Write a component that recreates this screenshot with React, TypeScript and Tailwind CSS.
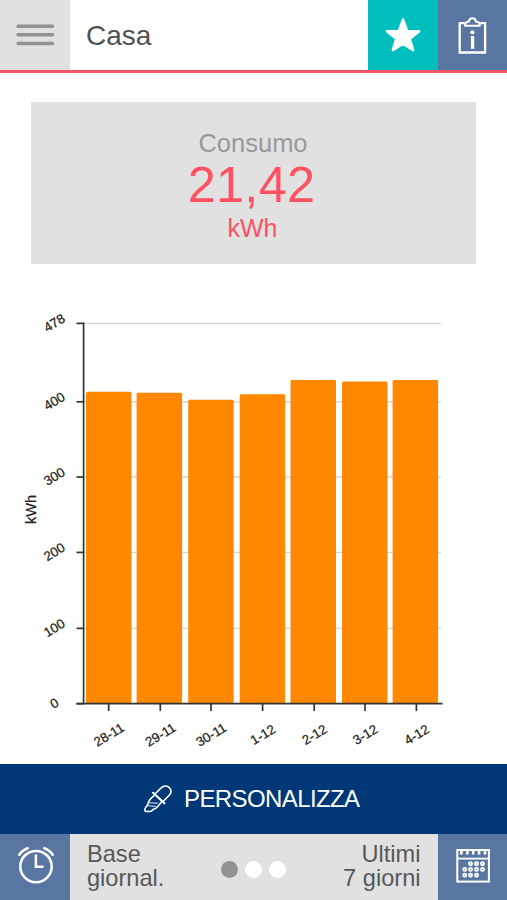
const bars = [
  { label: '28-11', x: 86, top: 391.7, tick: 108.7 },
  { label: '29-11', x: 136.6, top: 392.7, tick: 160.3 },
  { label: '30-11', x: 188.2, top: 399.8, tick: 211 },
  { label: '1-12', x: 239.7, top: 394.3, tick: 262.6 },
  { label: '2-12', x: 290.5, top: 380, tick: 314.2 },
  { label: '3-12', x: 342, top: 381.6, tick: 365 },
  { label: '4-12', x: 392.6, top: 380, tick: 416.4 },
];

const ticks = [
  { label: '478', y: 323.4 },
  { label: '400', y: 401.8 },
  { label: '300', y: 477 },
  { label: '200', y: 552.4 },
  { label: '100', y: 628.4 },
  { label: '0', y: 703.7 },
];

function MenuIcon() {
  return (
    <svg width="70" height="69" viewBox="0 0 70 69" stroke="#929292" strokeWidth="3.4" strokeLinecap="round">
      <path d="M18 26.2H52.5M18 34.8H52.5M18 43.5H52.5" />
    </svg>
  );
}

function StarIcon() {
  return (
    <svg width="70" height="69" viewBox="0 0 70 69" fill="#fff" stroke="#fff" strokeWidth="2.4" strokeLinejoin="round">
      <path d="M35 19.5L39.2 31L51.2 31.3L41.8 38.8L45.2 50.2L35 43.8L24.8 50.2L28.2 38.8L18.8 31.3L30.8 31Z" />
    </svg>
  );
}

function ClipboardIcon() {
  return (
    <svg width="69" height="69" viewBox="0 0 69 69" fill="none" stroke="#fff" strokeWidth="2.3">
      <path d="M26.6 23.2H21.7V52.5H47.1V23.2H42.2" />
      <path d="M27 25.7C27 22.7 28.4 21.7 31.1 21.6C31.1 17.2 37.7 17.2 37.7 21.6C40.4 21.7 41.8 22.7 41.8 25.7Z" strokeWidth="2" strokeLinejoin="round" />
      <circle cx="34.4" cy="32.3" r="2.1" fill="#fff" stroke="none" />
      <path d="M34.6 36V48.5" strokeWidth="3.2" />
      <path d="M32.6 36.6H34.6M32.6 48H36.6" strokeWidth="1.2" />
    </svg>
  );
}

function DropperIcon() {
  return (
    <svg width="30" height="30" viewBox="0 0 30 30" fill="none" stroke="#fff" strokeWidth="1.6" strokeLinecap="round" strokeLinejoin="round">
      <path d="M12.2 9.8L18.2 3.9C21.2 1 24.6 1.8 26.4 3.8C28.5 6.2 28.4 9 26.2 11.3L20.3 17.2" />
      <path d="M10.1 8.8L21.4 19.3" strokeWidth="2.2" />
      <path d="M11.4 11.3C7.2 14.4 5.2 16.7 4.9 20.3L2 24.6C1.2 26.9 2.6 28.2 4.6 27.2C6.8 27.8 9.1 27.3 10 25.4C13.2 25.6 15 22.4 18.6 17.8" />
      <path d="M5.5 18.7L14.4 19.1M5 21.8L12.2 22.4" strokeWidth="1.1" strokeOpacity="0.8" />
    </svg>
  );
}

function AlarmIcon() {
  return (
    <svg width="70" height="66" viewBox="0 0 70 66" fill="none" stroke="#fff" strokeWidth="2.5" strokeLinecap="round">
      <circle cx="36" cy="32.6" r="15.7" />
      <path d="M35.9 20.6V32.8H43.6" strokeLinecap="butt" />
      <path d="M19.3 20.8C21.4 17.7 24.3 15.4 27.8 14.3M44.2 14.3C47.7 15.4 50.6 17.7 52.7 20.8" />
    </svg>
  );
}

function CalendarIcon() {
  const dots = [
    [32.5, 29.8], [38.5, 29.8], [44.5, 29.8],
    [26.7, 35.4], [32.5, 35.4], [38.5, 35.4], [44.5, 35.4],
    [26.7, 41.2], [32.5, 41.2], [38.5, 41.2],
  ];
  return (
    <svg width="69" height="66" viewBox="0 0 69 66" fill="none" stroke="#fff" strokeWidth="2">
      <rect x="19.3" y="16" width="31.6" height="31.6" />
      <path d="M19.3 24.6H50.9" strokeWidth="1.8" />
      <path d="M23.4 16V20.4M29.3 16V20.4M35.2 16V20.4M41.1 16V20.4M47 16V20.4" strokeWidth="2.6" />
      {dots.map(([x, y]) => (
        <circle key={`${x}-${y}`} cx={x} cy={y} r="1.5" strokeWidth="1.9" />
      ))}
    </svg>
  );
}

function Chart() {
  return (
    <svg className="block h-[500px] w-full" viewBox="0 264 507 500" fontFamily="'Liberation Sans', Arial, sans-serif">
      {ticks.slice(0, 5).map((t) => (
        <path key={t.label} d={`M84 ${t.y}H441`} stroke="#d5d5d5" strokeWidth="1.4" />
      ))}
      {bars.map((b) => (
        <path
          key={b.label}
          d={`M${b.x} 703V${b.top + 1.5}q0 -1.5 1.5 -1.5h42.5q1.5 0 1.5 1.5V703Z`}
          fill="#ff8800"
        />
      ))}
      <g stroke="#333" strokeWidth="1.7">
        <path d="M83.6 322.6V704.3M76.5 703.7H442.5" />
        {ticks.map((t) => (
          <path key={t.label} d={`M76.5 ${t.y}H83.6`} />
        ))}
        {bars.map((b) => (
          <path key={b.label} d={`M${b.tick} 703.7V711`} />
        ))}
      </g>
      <g fill="#222" stroke="#222" strokeWidth="0.25" fontSize="13.2" textAnchor="middle">
        {ticks.map((t) => (
          <text key={t.label} transform={`translate(54.2 ${t.y - 0.6}) rotate(-31)`} y="4.6">
            {t.label}
          </text>
        ))}
        {bars.map((b) => (
          <text key={b.label} transform={`translate(${b.tick + 0.2} 734.6) rotate(-31)`} y="4.6">
            {b.label}
          </text>
        ))}
        <text transform="translate(36.2 509.4) rotate(-90)" fontSize="14.6">
          kWh
        </text>
      </g>
    </svg>
  );
}

export default function App() {
  return (
    <div className="flex h-[900px] w-[507px] flex-col overflow-hidden bg-white font-['Liberation_Sans',Arial,sans-serif]">
      <header className="flex h-[72.5px] shrink-0 border-b-[3px] border-[#f25565]">
        <button className="w-[70px] bg-[#e1e1e1]" aria-label="Menu">
          <MenuIcon />
        </button>
        <h1 className="flex-1 pt-[15px] pl-4 text-[28px] leading-[42px] text-[#505354]">Casa</h1>
        <button className="w-[70px] bg-[#00bebe]" aria-label="Preferiti">
          <StarIcon />
        </button>
        <button className="w-[69px] bg-[#5876a1]" aria-label="Info">
          <ClipboardIcon />
        </button>
      </header>

      <main className="flex h-[691.5px] shrink-0 flex-col">
        <section className="mt-[29.5px] mr-[31px] ml-[31px] flex h-[162px] shrink-0 flex-col items-center bg-[#e1e1e1] pt-[26px]">
          <p className="pr-px text-[25.5px] leading-[31px] text-[#999]">Consumo</p>
          <p className="pr-1 text-[50.4px] leading-[52px] tracking-[0.3px] text-[#ff5162]">21,42</p>
          <p className="pr-[2px] text-[25px] leading-[34px] text-[#ff5162]">kWh</p>
        </section>
        <Chart />
      </main>

      <button className="flex h-[70px] shrink-0 items-center bg-[#003777] pl-[143px]">
        <DropperIcon />
        <span className="pl-[11px] text-[24px] tracking-[-0.6px] text-white">PERSONALIZZA</span>
      </button>

      <footer className="flex h-[66px] shrink-0 bg-[#e1e1e1] text-[23.6px] leading-6 text-[#565859]">
        <button className="w-[70px] bg-[#5876a1]" aria-label="Base temporale">
          <AlarmIcon />
        </button>
        <p className="w-[151px] pt-2 pl-[17px]">
          Base
          <br />
          giornal.
        </p>
        <div className="flex flex-1 gap-[7px] pt-[26.5px]">
          <span className="size-[17px] rounded-full bg-[#929292]" />
          <span className="size-[17px] rounded-full bg-white" />
          <span className="size-[17px] rounded-full bg-white" />
        </div>
        <p className="pt-2 pr-[17.5px] text-right">
          Ultimi
          <br />7 giorni
        </p>
        <button className="w-[69px] bg-[#5876a1]" aria-label="Calendario">
          <CalendarIcon />
        </button>
      </footer>
    </div>
  );
}
